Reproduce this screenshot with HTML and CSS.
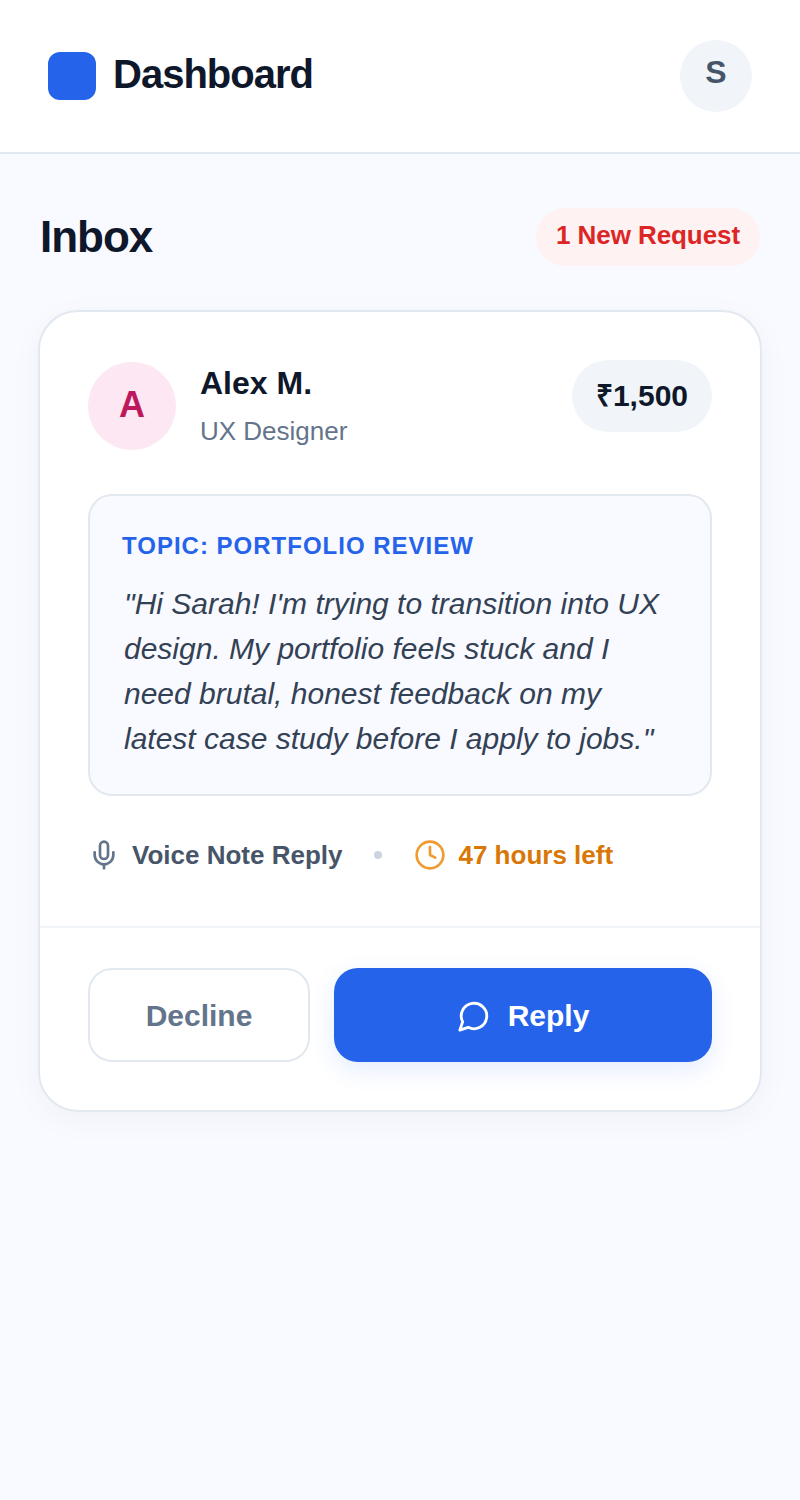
FILE: index.html
```html
<!DOCTYPE html>
<html lang="en">
<head>
  <meta charset="UTF-8" />
  <meta name="viewport" content="width=device-width, initial-scale=1" />
  <title>Dashboard</title>
  <link rel="stylesheet" href="styles.css">
</head>
<body>
  <header class="topbar">
    <div class="brand">
      <div class="brand-mark"></div>
      <h1>Dashboard</h1>
    </div>
    <div class="user-avatar">S</div>
  </header>
  <main class="content">
    <div class="inbox-head">
      <h2>Inbox</h2>
      <span class="new-badge">1 New Request</span>
    </div>
    <section class="card">
      <div class="card-body">
        <div class="sender">
          <div class="sender-info">
            <div class="sender-avatar">A</div>
            <div>
              <div class="sender-name">Alex M.</div>
              <div class="sender-role">UX Designer</div>
            </div>
          </div>
          <div class="price">₹1,500</div>
        </div>
        <div class="message">
          <div class="topic">TOPIC: PORTFOLIO REVIEW</div>
          <p>"Hi Sarah! I'm trying to transition into UX design. My portfolio feels stuck and I need brutal, honest feedback on my latest case study before I apply to jobs."</p>
        </div>
        <div class="meta">
          <span class="meta-item voice">
            <svg class="icon" viewBox="0 0 24 24" fill="none" stroke="currentColor" stroke-width="2" stroke-linecap="round" stroke-linejoin="round">
              <path d="M12 2a3 3 0 0 0-3 3v7a3 3 0 0 0 6 0V5a3 3 0 0 0-3-3z" />
              <path d="M19 10v2a7 7 0 0 1-14 0v-2" />
              <line x1="12" y1="19" x2="12" y2="22" />
            </svg>
            Voice Note Reply
          </span>
          <span class="dot"></span>
          <span class="meta-item time">
            <svg class="icon" viewBox="0 0 24 24" fill="none" stroke="currentColor" stroke-width="2" stroke-linecap="round" stroke-linejoin="round">
              <circle cx="12" cy="12" r="10" />
              <polyline points="12 6 12 12 16 14" />
            </svg>
            47 hours left
          </span>
        </div>
      </div>
      <div class="actions">
        <button class="btn btn-decline">Decline</button>
        <button class="btn btn-reply">
          <svg class="reply-icon" viewBox="0 0 24 24" fill="none" stroke="#fff" stroke-width="2" stroke-linecap="round" stroke-linejoin="round">
            <path d="M7.9 20A9 9 0 1 0 4 16.1L2 22z" />
          </svg>
          Reply
        </button>
      </div>
    </section>
  </main>
</body>
</html>
```

FILE: styles.css
```css
* {
  box-sizing: border-box;
}
body {
  margin: 0;
  min-height: 1500px;
  font-family: "Liberation Sans", Arial, sans-serif;
  background-color: #f9faff;
  color: #0f172a;
}
.topbar {
  display: flex;
  justify-content: space-between;
  align-items: center;
  height: 154px;
  padding: 0 48px;
  background: #fff;
  border-bottom: 2px solid #e2e8f0;
}
.brand {
  display: flex;
  align-items: center;
  gap: 17px;
}
.brand-mark {
  width: 48px;
  height: 48px;
  background: #2563eb;
  border-radius: 12px;
}
.brand h1 {
  margin: 0 0 4px;
  font-size: 40px;
  letter-spacing: -1px;
}
.user-avatar {
  display: flex;
  align-items: center;
  justify-content: center;
  width: 72px;
  height: 72px;
  padding-bottom: 7px;
  border-radius: 50%;
  background: #f1f5f9;
  color: #475569;
  font-size: 32px;
  font-weight: bold;
}
.content {
  padding: 54px 38px 0;
}
.inbox-head {
  display: flex;
  justify-content: space-between;
  align-items: center;
  padding: 0 2px;
  margin-bottom: 44px;
}
.inbox-head h2 {
  margin: 0;
  font-size: 44px;
  letter-spacing: -1px;
}
.new-badge {
  padding: 12px 20px 16px;
  border-radius: 29px;
  background: #fef2f2;
  color: #dc2626;
  font-size: 26px;
  line-height: 30px;
  font-weight: bold;
  letter-spacing: -0.08px;
}
.card {
  background: #fff;
  border: 2px solid #e2e8f0;
  border-radius: 40px;
  box-shadow: 0 8px 32px rgba(15, 23, 42, 0.04);
}
.card-body {
  padding: 48px 48px 55px;
  border-bottom: 2px solid #f1f5f9;
}
.sender {
  display: flex;
  justify-content: space-between;
  align-items: flex-start;
  margin-bottom: 44px;
}
.sender-info {
  display: flex;
  align-items: center;
  gap: 24px;
  margin-top: 2px;
}
.sender-avatar {
  display: flex;
  align-items: center;
  justify-content: center;
  width: 88px;
  height: 88px;
  padding-bottom: 2px;
  border-radius: 50%;
  background: #fce7f3;
  color: #be185d;
  font-size: 36px;
  font-weight: bold;
}
.sender-name {
  font-size: 32px;
  font-weight: bold;
  margin-bottom: 14px;
}
.sender-role {
  font-size: 26px;
  color: #64748b;
}
.price {
  display: flex;
  align-items: center;
  height: 72px;
  padding: 0 24px 4px;
  border-radius: 36px;
  background: #f1f5f9;
  font-size: 30px;
  font-weight: bold;
}
.message {
  padding: 32px 32px 33px;
  background-color: #f9faff;
  border: 2px solid #e2e8f0;
  border-radius: 24px;
}
.topic {
  color: #2563eb;
  font-size: 24px;
  line-height: 36px;
  font-weight: bold;
  letter-spacing: 1px;
  margin-bottom: 17px;
}
.message p {
  margin: 0;
  padding-left: 2px;
  color: #334155;
  font-size: 30px;
  font-style: italic;
  line-height: 45px;
}
.meta {
  display: flex;
  align-items: center;
  gap: 32px;
  margin-top: 43px;
  font-size: 26px;
  font-weight: bold;
}
.meta-item {
  display: flex;
  align-items: center;
  gap: 12px;
}
.icon {
  width: 32px;
  height: 32px;
  flex-shrink: 0;
}
.voice {
  color: #475569;
}
.voice .icon {
  color: #64748b;
}
.time {
  color: #d97706;
}
.time .icon {
  color: #ef9b30;
}
.dot {
  width: 8px;
  height: 8px;
  border-radius: 50%;
  background: #cbd5e1;
}
.actions {
  display: flex;
  gap: 24px;
  padding: 40px 48px 48px;
}
.btn {
  display: flex;
  align-items: center;
  justify-content: center;
  height: 94px;
  padding: 2px 0 0;
  border-radius: 24px;
  font-family: inherit;
  font-size: 30px;
  font-weight: bold;
}
.btn-decline {
  flex: 0 0 222px;
  background: #fff;
  border: 2px solid #e2e8f0;
  color: #64748b;
}
.btn-reply {
  flex: 1;
  gap: 17px;
  background: #2563eb;
  border: none;
  color: #fff;
  box-shadow: 0 8px 24px rgba(37, 99, 235, 0.12);
}
.reply-icon {
  width: 34px;
  height: 34px;
}
```
